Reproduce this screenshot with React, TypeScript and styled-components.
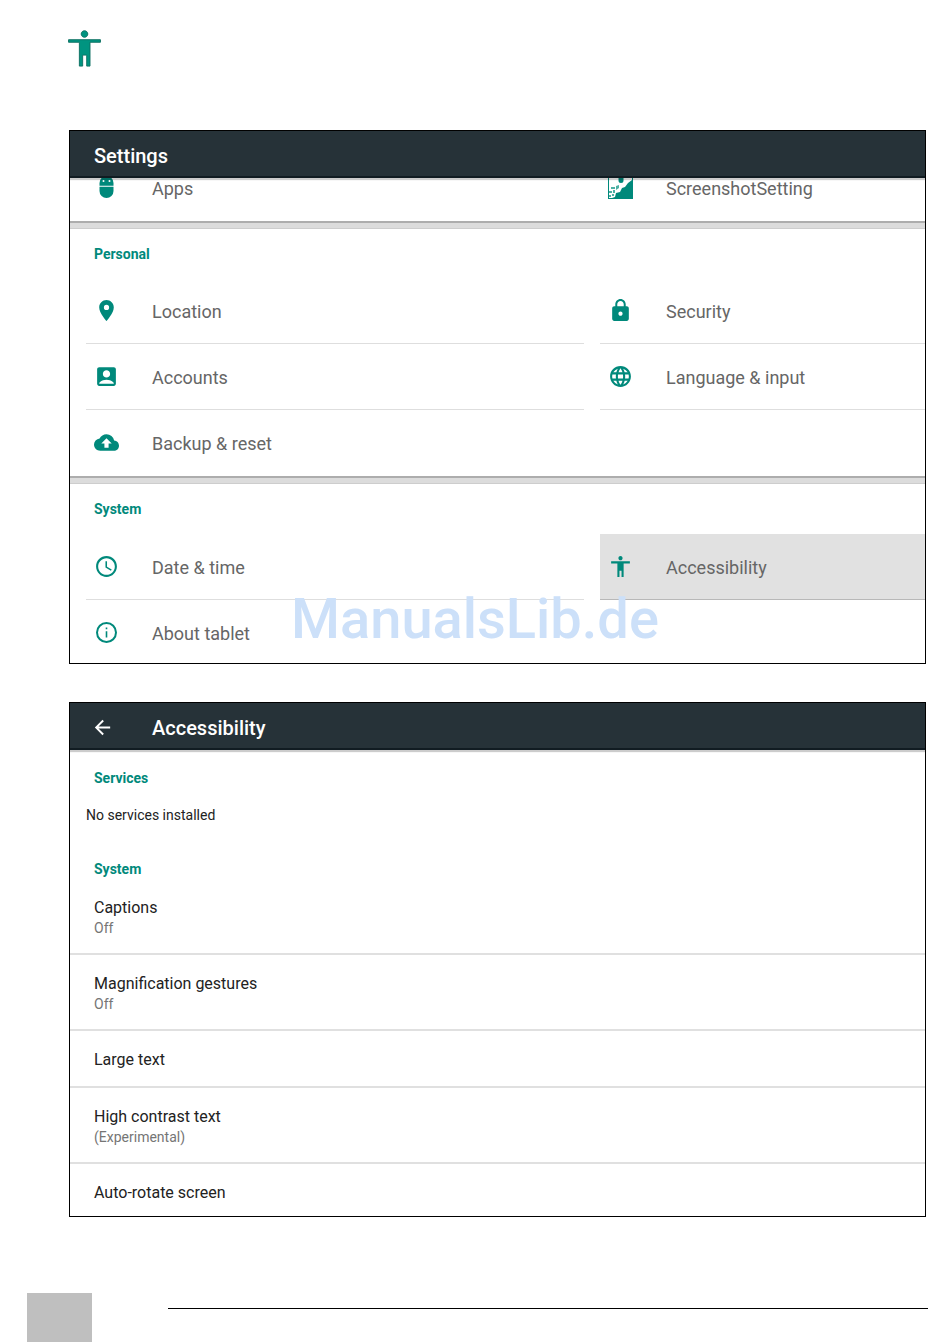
import React from "react";
import styled, { createGlobalStyle, css } from "styled-components";
import {
  MdAccessTime,
  MdAccessibility,
  MdAccountBox,
  MdArrowBack,
  MdBackup,
  MdLanguage,
  MdLocationOn,
  MdLock,
} from "react-icons/md";

const teal = "#00897b";

const GlobalStyle = createGlobalStyle`
  *, *::before, *::after { box-sizing: border-box; }
  body {
    margin: 0;
    background: #fff;
    font-family: Roboto, "Liberation Sans", sans-serif;
  }
  h1, h2, h3, p, ul { margin: 0; padding: 0; }
  ul { list-style: none; }
`;

const Page = styled.main`
  display: flex;
  flex-direction: column;
`;

const PageHeader = styled.header`
  padding: 30px 24px 63px 68px;

  svg { display: block; }
`;

const Figure = styled.section`
  position: relative;
  padding: 0 24px 0 69px;

  & + & { margin-top: 38px; }
`;

const Screen = styled.div`
  border: 1px solid #000;
  background: #fff;
`;

const TitleBar = styled.div`
  position: relative;
  display: flex;
  align-items: center;
  height: 47px;
  padding: 4px 24px 0;
  background: #263238;
  border-bottom: 2px solid #111c22;
  box-shadow: 0 2px 1px rgba(0, 0, 0, 0.2);
`;

const Title = styled.h2`
  color: #fff;
  font-size: 20px;
  font-weight: 500;
  line-height: 24px;
`;

const BackButton = styled.button`
  display: flex;
  width: 58px;
  padding: 0;
  border: 0;
  background: none;
  color: #fff;
  cursor: pointer;

  svg { margin-left: -3px; }
`;

const Grid = styled.ul<{ $clip?: "top" | "bottom" }>`
  display: grid;
  grid-template-columns: minmax(0, 498fr) minmax(0, 325fr);
  column-gap: 16px;
  padding-left: 16px;
  ${(p) =>
    p.$clip === "top" &&
    css`
      height: 43px;
      align-content: end;
      overflow: hidden;
    `}
  ${(p) =>
    p.$clip === "bottom" &&
    css`
      height: 129px;
      overflow: hidden;
    `}
`;

const Tile = styled.a<{ $line?: boolean; $active?: boolean }>`
  display: flex;
  align-items: center;
  gap: 33px;
  height: 66px;
  padding: 0 8px;
  color: ${teal};
  text-decoration: none;
  border-bottom: 1px solid
    ${(p) => (p.$active ? "#b8b8b8" : p.$line ? "#dedede" : "transparent")};
  background: ${(p) => (p.$active ? "#e1e1e1" : "transparent")};

  svg { flex: none; }
`;

const TileLabel = styled.span`
  padding-top: 3px;
  color: #666;
  font-size: 18px;
  line-height: 24px;
  white-space: nowrap;
`;

const Separator = styled.div`
  height: 8px;
  border-top: 2px solid #adadad;
  border-bottom: 1px solid #cdcdcd;
  background: #dcdcdc;
`;

const GroupHeading = styled.h3`
  padding: 15px 24px;
  color: ${teal};
  font-size: 14px;
  font-weight: 700;
  line-height: 20px;

  ${Grid} + ${Separator} + & { margin-bottom: 0; }
`;

const FirstGroupHeading = styled(GroupHeading)`
  padding-bottom: 14px;
`;

const Watermark = styled.span`
  position: absolute;
  right: 0;
  bottom: 13px;
  left: 0;
  color: #cce0f9;
  font-size: 56px;
  font-weight: 500;
  line-height: 64px;
  text-align: center;
  pointer-events: none;
`;

const Preferences = styled.div`
  padding-top: 2px;
`;

const PreferenceHeading = styled(GroupHeading)`
  padding: 16px 24px 0;
`;

const EmptyNote = styled.p`
  padding: 17px 16px 18px;
  color: #222;
  font-size: 14px;
  line-height: 20px;
`;

const Preference = styled.li`
  min-height: 57px;
  padding: 19px 24px 14px;
  border-bottom: 2px solid #e0e0e0;

  &:last-child {
    min-height: 0;
    padding-bottom: 13px;
    border-bottom: 0;
  }
`;

const PreferenceName = styled.p`
  color: #222;
  font-size: 16px;
  line-height: 20px;
`;

const PreferenceState = styled.p`
  color: #757575;
  font-size: 14px;
  line-height: 21px;
`;

const PageFooter = styled.footer`
  display: flex;
  gap: 76px;
  padding: 76px 22px 2px 27px;
`;

const PageNumberBox = styled.div`
  width: 65px;
  height: 49px;
  background: #bfbfbf;
`;

const FooterRule = styled.div`
  flex: 1;
  margin-top: 15px;
  border-top: 1px solid #000;
`;

const AccessibilityMark = () => (
  <svg width="33" height="37" viewBox="3 2 18 20" role="img" aria-label="Accessibility">
    <path
      d="M12 2.3c1 0 1.800.8 1.800 1.800S13 5.900 12 5.900s-1.800-.8-1.800-1.800.8-1.800 1.800-1.800zM20.700 8.600H15v13h-1.800v-6h-2.200v6H9.200V8.600H3.300V7.200h17.400z"
      fill="#009480"
      stroke="#0b6e60"
      strokeWidth="0.500"
    />
  </svg>
);

const AppsIcon = () => (
  <svg width="25" height="25" viewBox="0 0 25 25" aria-hidden="true">
    <path d="M5.500 10.800V8a7 7 0 0 1 14 0v2.800z" fill={teal} />
    <path d="M5.500 11.800h14V16a7 7 0 0 1-14 0z" fill={teal} />
    <circle cx="9.500" cy="6" r="1" fill="#fff" />
    <circle cx="15.500" cy="6" r="1" fill="#fff" />
  </svg>
);

const ScreenshotIcon = () => (
  <svg width="25" height="25" viewBox="0 0 25 25" aria-hidden="true">
    <path d="M0 0h25v24H0z" fill={teal} />
    <path d="M1 1h23v4l-4 3-3 4-3 1-2 4-4 1-1 4-3 1H1z" fill="#fff" />
    <path d="M10.500 3h5v2.500a2.500 2.500 0 0 1-5 0z" fill={teal} />
    <path d="M3 12h4v2H3zM8 11l3-1v3l-3 2zM1 16h3v2H1zM5 15h2v3H5z" fill="#4db0a4" />
    <path d="M1 20h2v2H1zM4 19h2v2H4z" fill="#4db0a4" />
  </svg>
);

const AboutIcon = () => (
  <svg width="25" height="25" viewBox="0 0 25 25" aria-hidden="true">
    <circle cx="12.500" cy="12.500" r="9.500" fill="none" stroke={teal} strokeWidth="2" />
    <path d="M11.700 7.500h1.600v1.800h-1.600zM11.700 11.300h1.600v6.200h-1.600z" fill={teal} />
  </svg>
);

type Item = {
  label: string;
  icon: React.ReactNode;
  line?: boolean;
  active?: boolean;
};

const device: Item[] = [
  { label: "Apps", icon: <AppsIcon /> },
  { label: "ScreenshotSetting", icon: <ScreenshotIcon /> },
];

const personal: Item[] = [
  { label: "Location", icon: <MdLocationOn size={25} />, line: true },
  { label: "Security", icon: <MdLock size={25} />, line: true },
  { label: "Accounts", icon: <MdAccountBox size={25} />, line: true },
  { label: "Language & input", icon: <MdLanguage size={25} />, line: true },
  { label: "Backup & reset", icon: <MdBackup size={25} /> },
];

const system: Item[] = [
  { label: "Date & time", icon: <MdAccessTime size={25} />, line: true },
  { label: "Accessibility", icon: <MdAccessibility size={25} />, active: true },
  { label: "About tablet", icon: <AboutIcon /> },
];

const preferences = [
  { name: "Captions", state: "Off" },
  { name: "Magnification gestures", state: "Off" },
  { name: "Large text" },
  { name: "High contrast text", state: "(Experimental)" },
  { name: "Auto-rotate screen" },
];

const TileGrid = ({ items, clip }: { items: Item[]; clip?: "top" | "bottom" }) => (
  <Grid $clip={clip}>
    {items.map((item) => (
      <li key={item.label}>
        <Tile href="#" $line={item.line} $active={item.active}>
          {item.icon}
          <TileLabel>{item.label}</TileLabel>
        </Tile>
      </li>
    ))}
  </Grid>
);

export default function App() {
  return (
    <>
      <GlobalStyle />
      <Page>
        <PageHeader>
          <AccessibilityMark />
        </PageHeader>

        <Figure>
          <Screen>
            <TitleBar>
              <Title>Settings</Title>
            </TitleBar>
            <TileGrid items={device} clip="top" />
            <Separator />
            <FirstGroupHeading>Personal</FirstGroupHeading>
            <TileGrid items={personal} />
            <Separator />
            <GroupHeading>System</GroupHeading>
            <TileGrid items={system} clip="bottom" />
          </Screen>
          <Watermark>ManualsLib.de</Watermark>
        </Figure>

        <Figure>
          <Screen>
            <TitleBar>
              <BackButton type="button" aria-label="Back">
                <MdArrowBack size={23} />
              </BackButton>
              <Title>Accessibility</Title>
            </TitleBar>
            <Preferences>
              <PreferenceHeading>Services</PreferenceHeading>
              <EmptyNote>No services installed</EmptyNote>
              <PreferenceHeading>System</PreferenceHeading>
              <ul>
                {preferences.map((pref) => (
                  <Preference key={pref.name}>
                    <PreferenceName>{pref.name}</PreferenceName>
                    {pref.state && <PreferenceState>{pref.state}</PreferenceState>}
                  </Preference>
                ))}
              </ul>
            </Preferences>
          </Screen>
        </Figure>

        <PageFooter>
          <PageNumberBox />
          <FooterRule />
        </PageFooter>
      </Page>
    </>
  );
}
